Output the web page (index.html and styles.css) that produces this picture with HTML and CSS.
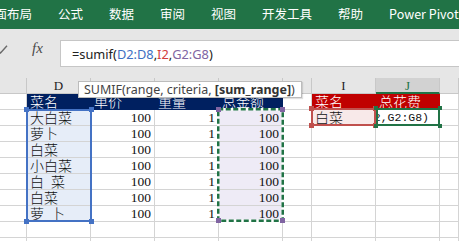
FILE: index.html
```html
<!DOCTYPE html>
<html lang="zh-CN">
<head>
<meta charset="utf-8">
<title>Excel SUMIF</title>
<link rel="stylesheet" href="styles.css">
</head>
<body>
<div class="ribbon">
  <span class="tab first">页面布局</span>
  <span class="tab">公式</span>
  <span class="tab">数据</span>
  <span class="tab">审阅</span>
  <span class="tab">视图</span>
  <span class="tab">开发工具</span>
  <span class="tab">帮助</span>
  <span class="tab">Power Pivot</span>
</div>
<div class="fbar">
  <div class="fctl">
    <svg class="check" width="10" height="9" viewBox="0 0 10 9"><path d="M-2 4.5 L1.5 8 L8 0.8" fill="none" stroke="#6a6a6a" stroke-width="1.4"/></svg>
    <span class="fx">fx</span>
  </div>
  <div class="fbox"><span>=sumif(</span><span class="rb">D2:D8</span><span>,</span><span class="rr">I2</span><span>,</span><span class="rp">G2:G8</span><span>)</span></div>
</div>
<div class="sheet">
  <div class="grid">
    <!-- column headers -->
    <div class="h"></div><div class="h">D</div><div class="h"></div><div class="h"></div><div class="h"></div><div class="h"></div><div class="h">I</div><div class="h sel">J</div><div class="h"></div>
    <!-- row 1 -->
    <div class="c"></div><div class="c nv">菜名</div><div class="c nv">单价</div><div class="c nv">重量</div><div class="c nv">总金额</div><div class="c"></div><div class="c rd">菜名</div><div class="c rd">总花费</div><div class="c"></div>
    <!-- row 2 -->
    <div class="c"></div><div class="c sb">大白菜</div><div class="c n">100</div><div class="c n">1</div><div class="c sp n">100</div><div class="c"></div><div class="c pk">白菜</div><div class="c ed"><span>=sumif(D2:D8,I2,G2:G8)</span></div><div class="c"></div>
    <!-- row 3 -->
    <div class="c"></div><div class="c sb">萝卜</div><div class="c n">100</div><div class="c n">1</div><div class="c sp n">100</div><div class="c"></div><div class="c"></div><div class="c"></div><div class="c"></div>
    <!-- row 4 -->
    <div class="c"></div><div class="c sb">白菜</div><div class="c n">100</div><div class="c n">1</div><div class="c sp n">100</div><div class="c"></div><div class="c"></div><div class="c"></div><div class="c"></div>
    <!-- row 5 -->
    <div class="c"></div><div class="c sb">小白菜</div><div class="c n">100</div><div class="c n">1</div><div class="c sp n">100</div><div class="c"></div><div class="c"></div><div class="c"></div><div class="c"></div>
    <!-- row 6 -->
    <div class="c"></div><div class="c sb">白&ensp;菜</div><div class="c n">100</div><div class="c n">1</div><div class="c sp n">100</div><div class="c"></div><div class="c"></div><div class="c"></div><div class="c"></div>
    <!-- row 7 -->
    <div class="c"></div><div class="c sb">白菜</div><div class="c n">100</div><div class="c n">1</div><div class="c sp n">100</div><div class="c"></div><div class="c"></div><div class="c"></div><div class="c"></div>
    <!-- row 8 -->
    <div class="c"></div><div class="c sb">萝&ensp;卜</div><div class="c n">100</div><div class="c n">1</div><div class="c sp n">100</div><div class="c"></div><div class="c"></div><div class="c"></div><div class="c"></div>
    <!-- row 9 -->
    <div class="c"></div><div class="c"></div><div class="c"></div><div class="c"></div><div class="c"></div><div class="c"></div><div class="c"></div><div class="c"></div><div class="c"></div>
    <!-- row 10 -->
    <div class="c"></div><div class="c"></div><div class="c"></div><div class="c"></div><div class="c"></div><div class="c"></div><div class="c"></div><div class="c"></div><div class="c"></div>
  </div>

  <div class="rng rng-d">
    <i class="hd tl"></i><i class="hd tr"></i><i class="hd bl"></i><i class="hd br"></i>
  </div>
  <div class="rng rng-g">
    <svg width="67" height="114" viewBox="0 0 67 114">
      <rect x="1.25" y="1.25" width="64.5" height="111.5" fill="none" stroke="#ffffff" stroke-width="2.5"/>
      <rect x="1.25" y="1.25" width="64.5" height="111.5" fill="none" stroke="#217346" stroke-width="2.5" stroke-dasharray="5 2.5"/>
    </svg>
    <i class="hd tl"></i><i class="hd tr"></i><i class="hd bl"></i><i class="hd br"></i>
  </div>
  <div class="rng rng-i">
    <i class="hd tl"></i><i class="hd tr"></i><i class="hd bl"></i><i class="hd br"></i>
  </div>
  <div class="rng rng-j">
    <i class="hd tl"></i><i class="hd tr"></i><i class="hd bl"></i><i class="hd br"></i>
  </div>

  <div class="tip">SUMIF(range, criteria, <b>[sum_range]</b>)</div>
</div>
</body>
</html>
```
FILE: styles.css
```css
html, body {
  margin: 0;
  padding: 0;
}
body {
  width: 459px;
  height: 241px;
  overflow: hidden;
  background: #ffffff;
  font-family: "Noto Sans CJK SC", "Noto Sans", sans-serif;
}

/* ribbon tabs */
.ribbon {
  height: 29px;
  background: #217346;
  display: flex;
  align-items: center;
  gap: 26px;
  white-space: nowrap;
  overflow: hidden;
  color: #ffffff;
  font-size: 12.5px;
  font-family: "Noto Sans CJK SC", "Noto Sans", sans-serif;
}
.tab {
  flex: none;
  line-height: 16px;
  padding-bottom: 1px;
}
.tab.first {
  margin-left: -18px;
}

/* formula bar */
.fbar {
  height: 49px;
  background: #e6e6e6;
  display: flex;
  align-items: flex-start;
  overflow: hidden;
}
.fctl {
  width: 60px;
  flex: none;
  height: 38px;
  display: flex;
  align-items: center;
}
.check {
  margin-left: -1px;
  margin-top: 3px;
}
.fx {
  margin-left: 23px;
  font-family: "Liberation Serif", serif;
  font-style: italic;
  font-size: 15px;
  color: #4a4a4a;
  margin-top: 1px;
}
.fbox {
  margin-top: 11px;
  height: 27px;
  flex: 1 0 auto;
  box-sizing: border-box;
  border: 1px solid #c6c6c6;
  border-right: none;
  background: #ffffff;
  padding-left: 11px;
  display: flex;
  align-items: center;
  font-family: "Noto Sans", sans-serif;
  font-size: 12.8px;
  color: #222222;
  white-space: pre;
}
.rb { color: #3e6fc2; }
.rr { color: #d23c3c; }
.rp { color: #8064a2; }

/* sheet */
.sheet {
  position: relative;
}
.grid {
  display: grid;
  grid-template-columns: 27px 64px 64px 64px 64px 29px 64px 64px 19px;
  grid-auto-rows: 16px;
}
.h {
  box-sizing: border-box;
  background: #e6e6e6;
  border-right: 1px solid #c8c8c8;
  border-bottom: 1px solid #c8c8c8;
  text-align: center;
  font-family: "Liberation Serif", serif;
  font-size: 13px;
  line-height: 15px;
  color: #222222;
}
.h.sel {
  background: #d2d2d2;
  color: #217346;
  border-bottom: 2px solid #217346;
}
.c {
  box-sizing: border-box;
  border-right: 1px solid #d4d4d4;
  border-bottom: 1px solid #d4d4d4;
  font-size: 14px;
  font-weight: 300;
  line-height: 15px;
  padding-left: 3px;
  color: #111111;
  white-space: nowrap;
  overflow: hidden;
}
.c.n {
  text-align: right;
  padding-left: 0;
  padding-right: 3px;
  font-family: "Liberation Serif", serif;
  font-weight: 400;
  font-size: 13.5px;
}
.c.nv {
  background: #002060;
  border-color: #002060;
  color: #ffffff;
}
.c.rd {
  background: #c00000;
  border-color: #c00000;
  color: #ffffff;
}
.c.sb {
  background: #e6edf8;
}
.c.sp {
  background: #eeebf6;
}
.c.pk {
  background: #f8e9e9;
}
.c.ed {
  display: flex;
  justify-content: flex-end;
  padding-left: 0;
  padding-right: 10px;
  font-family: "Liberation Mono", monospace;
  font-weight: 400;
  font-size: 11.5px;
  line-height: 15px;
}
.c.ed span {
  flex: none;
}

/* range highlight overlays */
.rng {
  position: absolute;
  box-sizing: border-box;
}
.rng svg {
  position: absolute;
  left: 0;
  top: 0;
}
.rng-d {
  left: 26px;
  top: 31px;
  width: 66px;
  height: 113px;
  border: 2px solid #4472c4;
}
.rng-g {
  left: 217px;
  top: 30px;
  width: 67px;
  height: 114px;
}
.rng-i {
  left: 311px;
  top: 30px;
  width: 65px;
  height: 18px;
  border: 2px solid #c0504d;
}
.rng-j {
  left: 376px;
  top: 30px;
  width: 64px;
  height: 18px;
  border: 2px solid #217346;
}
.hd {
  position: absolute;
  width: 5px;
  height: 5px;
}
.rng-d .hd { background: #4472c4; }
.rng-g .hd { background: #8064a2; }
.rng-i .hd { background: #c0504d; }
.rng-j .hd { background: #217346; width: 4px; height: 4px; }
.rng-d .tl, .rng-i .tl, .rng-j .tl { left: -4px; top: -4px; }
.rng-d .tr, .rng-i .tr, .rng-j .tr { right: -4px; top: -4px; }
.rng-d .bl, .rng-i .bl, .rng-j .bl { left: -4px; bottom: -4px; }
.rng-d .br, .rng-i .br, .rng-j .br { right: -4px; bottom: -4px; }
.rng-g .tl { left: -1px; top: -1px; }
.rng-g .tr { right: -1px; top: -1px; }
.rng-g .bl { left: -1px; bottom: -1px; }
.rng-g .br { right: -1px; bottom: -1px; }

/* function tooltip */
.tip {
  position: absolute;
  left: 78px;
  top: 3px;
  width: 224px;
  height: 17px;
  box-sizing: border-box;
  border: 1px solid #bcbcbc;
  background: #ffffff;
  box-shadow: 1px 1px 1px rgba(0, 0, 0, 0.12);
  padding-left: 5px;
  font-family: "Noto Sans", sans-serif;
  font-size: 12.5px;
  line-height: 15px;
  color: #444444;
  white-space: nowrap;
  overflow: hidden;
}
.tip b {
  font-weight: 700;
  color: #333333;
}
```
